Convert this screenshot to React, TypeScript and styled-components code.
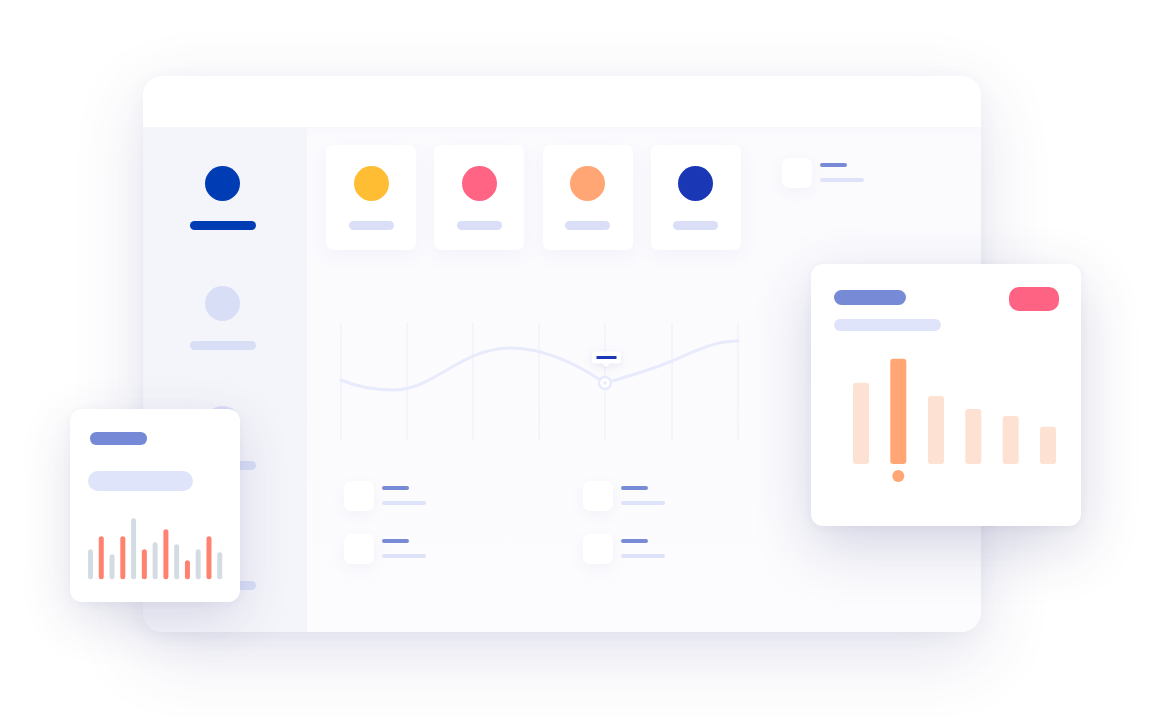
import React from "react";
import styled, { createGlobalStyle } from "styled-components";

const Global = createGlobalStyle`
  html, body { margin: 0; padding: 0; background: #ffffff; }
  body { font-family: "Inter", "Liberation Sans", sans-serif; }
  * { box-sizing: border-box; }
`;

const Stage = styled.div`
  position: relative;
  width: 1162px;
  height: 717px;
  overflow: hidden;
  background: #ffffff;
  padding: 76px 0 0 143px;
`;

const MainWindow = styled.div`
  width: 838px;
  height: 556px;
  border-radius: 20px;
  overflow: hidden;
  background: #ffffff;
  box-shadow: 0 22px 70px rgba(70, 70, 140, 0.15), 0 4px 20px rgba(70, 70, 140, 0.05);
  display: flex;
  flex-direction: column;
`;

const TopBar = styled.div`
  height: 51px;
  flex: none;
  background: #ffffff;
`;

const Body = styled.div`
  flex: 1;
  display: grid;
  grid-template-columns: 164px 1fr;
  min-height: 0;
`;

const Sidebar = styled.div`
  background: #f4f5fa;
  display: flex;
  flex-direction: column;
  align-items: center;
  padding: 39px 5px 0 0;
  gap: 56px;
`;

const NavItem = styled.div`
  display: flex;
  flex-direction: column;
  align-items: center;
  gap: 20px;
`;

const Dot = styled.div<{ $color: string }>`
  width: 35px;
  height: 35px;
  border-radius: 50%;
  background: ${(p) => p.$color};
`;

const NavBar = styled.div<{ $color: string }>`
  width: 66px;
  height: 9px;
  border-radius: 5px;
  background: ${(p) => p.$color};
`;

const Main = styled.div`
  background: linear-gradient(180deg, #f8f8fc 0px, #fbfbfe 12px, #fcfcfe 100%);
  padding: 18px 0 0 19px;
  display: flex;
  flex-direction: column;
`;

const TopRow = styled.div`
  display: flex;
  align-items: flex-start;
  gap: 18.3px;
`;

const StatCard = styled.div`
  width: 90px;
  height: 105px;
  border-radius: 7px;
  background: #ffffff;
  box-shadow: 0 6px 18px rgba(110, 115, 190, 0.07);
  display: flex;
  flex-direction: column;
  align-items: center;
  padding-top: 21px;
  gap: 20px;
`;

const StatLabel = styled.div`
  width: 45px;
  height: 9px;
  border-radius: 5px;
  background: #dadef7;
`;

const ListItem = styled.div<{ $offset?: string }>`
  display: flex;
  align-items: flex-start;
  gap: 8px;
  margin: ${(p) => p.$offset || "0"};
`;

const Square = styled.div`
  width: 30px;
  height: 30px;
  border-radius: 7px;
  background: #ffffff;
  box-shadow: 0 4px 14px rgba(110, 115, 190, 0.08);
`;

const Lines = styled.div`
  display: flex;
  flex-direction: column;
  gap: 11px;
  padding-top: 5px;
`;

const Line = styled.div<{ $w: number; $color: string }>`
  width: ${(p) => p.$w}px;
  height: 4px;
  border-radius: 2px;
  background: ${(p) => p.$color};
`;

const ChartBox = styled.svg`
  display: block;
  margin: 68px 0 0 14px;
  overflow: visible;
`;

const BottomList = styled.div`
  display: grid;
  grid-template-columns: 239px 239px;
  row-gap: 23px;
  margin: 37px 0 0 18px;
`;

const Card = styled.div`
  position: absolute;
  background: #ffffff;
  border-radius: 12px;
`;

const SmallCard = styled(Card)`
  left: 70px;
  top: 409px;
  width: 170px;
  height: 193px;
  padding: 23px 0 0 18px;
  box-shadow: 0 16px 50px rgba(60, 60, 130, 0.16), 0 2px 8px rgba(60, 60, 130, 0.04);
  display: flex;
  flex-direction: column;
`;

const BigCard = styled(Card)`
  left: 811px;
  top: 264px;
  width: 270px;
  height: 262px;
  padding: 23px 22px 0 23px;
  box-shadow: 0 20px 60px rgba(55, 55, 125, 0.2), 0 2px 10px rgba(55, 55, 125, 0.05);
  display: flex;
  flex-direction: column;
`;

const Pill = styled.div<{ $w: number; $h: number; $color: string; $mt?: number; $ml?: number }>`
  width: ${(p) => p.$w}px;
  height: ${(p) => p.$h}px;
  border-radius: ${(p) => p.$h / 2}px;
  background: ${(p) => p.$color};
  margin-top: ${(p) => p.$mt || 0}px;
  margin-left: ${(p) => p.$ml || 0}px;
  flex: none;
`;

const CardHeader = styled.div`
  display: flex;
  justify-content: space-between;
  align-items: flex-start;
`;

const Badge = styled.div`
  width: 50px;
  height: 24px;
  border-radius: 10px;
  background: #ff6384;
`;

const CardChart = styled.svg<{ $mt: number; $ml?: number }>`
  display: block;
  margin-top: ${(p) => p.$mt}px;
  margin-left: ${(p) => p.$ml || 0}px;
`;

const statColors = ["#ffbd33", "#ff6484", "#ffa674", "#1a37b5"];

const smallBars = [30, 43, 25, 43, 61, 30, 37, 50, 35, 19, 30, 43, 27];

const bigBars = [
  { x: 19, top: 38.7 },
  { x: 56.3, top: 14.7, active: true },
  { x: 94, top: 52 },
  { x: 131.3, top: 65 },
  { x: 168.7, top: 72 },
  { x: 206, top: 82.7 },
];

const gridX = [1, 67, 133, 199, 265, 332, 398];

function LineChart() {
  return (
    <ChartBox width={400} height={126} viewBox="0 0 400 126">
      {gridX.map((x) => (
        <line key={x} x1={x} y1={4.5} x2={x} y2={122.5} stroke="#eef0fa" strokeWidth={1.2} />
      ))}
      <path
        d="M1 62 C 18 69, 35 72, 53 72 C 95 72, 120 30, 171 30 C 205 30, 240 48, 265 65 C 290 58, 315 50, 332 43 C 360 31, 375 23, 398 23"
        fill="none"
        stroke="#e7ebfc"
        strokeWidth={3}
        strokeLinecap="round"
      />
      <circle cx={265} cy={65} r={6} fill="#ffffff" stroke="#e7ebfc" strokeWidth={2.5} />
      <circle cx={265} cy={65} r={1.8} fill="#e7ebfc" />
      <g style={{ filter: "drop-shadow(0 2px 4px rgba(90,100,180,0.14))" }}>
        <rect x={252} y={33.5} width={29} height={12} rx={3} fill="#ffffff" />
        <path d="M262 45.5 L266 49 L270 45.5 Z" fill="#ffffff" />
      </g>
      <line x1={256.5} y1={39.5} x2={276.5} y2={39.5} stroke="#1a37b5" strokeWidth={3} />
    </ChartBox>
  );
}

function SmallBars() {
  return (
    <CardChart $mt={18.5} width={136} height={72} viewBox="0 0 136 72">
      {smallBars.map((h, i) => (
        <rect
          key={i}
          x={i * 10.77}
          y={70.3 - h}
          width={5}
          height={h}
          rx={2.5}
          fill={i % 2 === 1 ? "#ff8270" : "#d4dce3"}
        />
      ))}
    </CardChart>
  );
}

function BigBars() {
  return (
    <CardChart $mt={13} width={225} height={140} viewBox="0 0 225 140">
      {bigBars.map((b, i) => (
        <rect
          key={i}
          x={b.x}
          y={b.top}
          width={16}
          height={120 - b.top}
          rx={3}
          fill={b.active ? "#ffa674" : "#fde2d3"}
        />
      ))}
      <circle cx={64.3} cy={132} r={6} fill="#ffa674" />
    </CardChart>
  );
}

function Item({ offset }: { offset?: string }) {
  return (
    <ListItem $offset={offset}>
      <Square />
      <Lines>
        <Line $w={27} $color="#7a8bd6" />
        <Line $w={44} $color="#dfe3fa" />
      </Lines>
    </ListItem>
  );
}

export default function App() {
  return (
    <>
      <Global />
      <Stage>
        <MainWindow>
          <TopBar />
          <Body>
            <Sidebar>
              <NavItem>
                <Dot $color="#003cb3" />
                <NavBar $color="#003cb3" />
              </NavItem>
              {[0, 1, 2].map((i) => (
                <NavItem key={i}>
                  <Dot $color="#d9def7" />
                  <NavBar $color="#d9def7" />
                </NavItem>
              ))}
            </Sidebar>
            <Main>
              <TopRow>
                {statColors.map((c) => (
                  <StatCard key={c}>
                    <Dot $color={c} />
                    <StatLabel />
                  </StatCard>
                ))}
                <Item offset="13px 0 0 23px" />
              </TopRow>
              <LineChart />
              <BottomList>
                <Item />
                <Item />
                <Item />
                <Item />
              </BottomList>
            </Main>
          </Body>
        </MainWindow>

        <SmallCard>
          <Pill $w={57} $h={12.5} $color="#7689d6" $ml={2} />
          <Pill $w={105} $h={20} $color="#dfe4fb" $mt={26} />
          <SmallBars />
        </SmallCard>

        <BigCard>
          <CardHeader>
            <Pill $w={72} $h={15} $color="#768ad6" $mt={2.5} />
            <Badge />
          </CardHeader>
          <Pill $w={107} $h={12} $color="#dfe4fb" $mt={8} />
          <BigBars />
        </BigCard>
      </Stage>
    </>
  );
}
